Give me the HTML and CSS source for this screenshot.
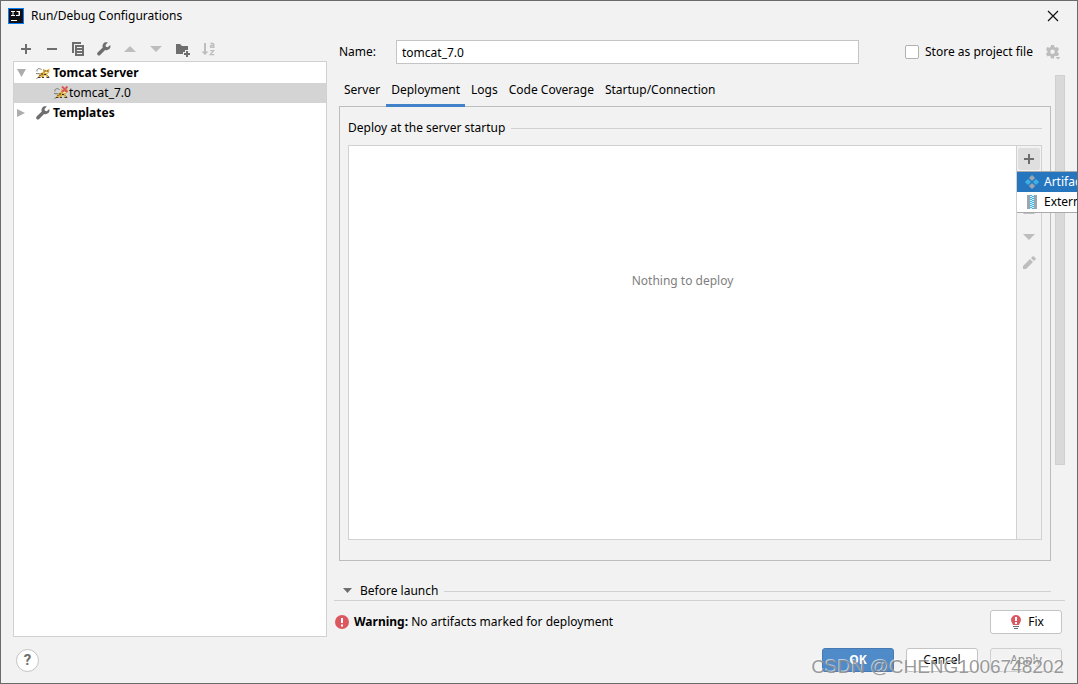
FILE: index.html
```html
<!DOCTYPE html>
<html lang="en">
<head>
<meta charset="utf-8">
<title>Run/Debug Configurations</title>
<link rel="stylesheet" href="styles.css">
</head>
<body>
<svg class="defs" aria-hidden="true">
  <symbol id="wrench" viewBox="0 0 16 16"><path fill="#6e6e6e" d="M14.2 3.9 11.8 6.2 9.9 5.8 9.5 4 11.8 1.6C10.2 1 8.3 1.400 7.300 2.700 6.400 3.900 6.300 5.300 6.800 6.600L1.600 11.500C1 12.200 1 13.200 1.600 13.900 2.300 14.600 3.400 14.700 4.200 13.900L9.100 8.900C10.500 9.400 12.100 9.200 13.300 8.100 14.500 7 14.800 5.300 14.200 3.900Z"/></symbol>
  <symbol id="up" viewBox="0 0 16 16"><path fill="#bdbdbd" d="M2 11 8 5l6 6z"/></symbol>
  <symbol id="down" viewBox="0 0 16 16"><path fill="#bdbdbd" d="M2 5h12l-6 6z"/></symbol>
  <symbol id="plus" viewBox="0 0 16 16"><path fill="#6e6e6e" d="M7 3h2v4h4v2H9v4H7V9H3V7h4z"/></symbol>
  <symbol id="cat" viewBox="0 0 16 16">
    <path d="M6.500 4.500C4 3 1.500 3.500 2 6.500M6 9 1 8.500M5 11.500 1.500 13.500M12 10l2.500 2.500" fill="none" stroke="#6b6b6b" stroke-width=".9"/>
    <path fill="#dcae3e" d="M3 12.500 4.500 9 8 7 8 3.500 10 5h2l2.500-1.500L14.200 7.500l-2.200 1.700 1 2.800h-1.500L10 10l-2 2.500H6.500L6 11l-1.500 2z"/>
    <path fill="#443521" d="M9.500 5.500h1v1h-1zM12.200 5.500h1v1h-1zM6 8.500h2v1H6zM3 12h2.500v1H3zM9 9h2v1H9zM4.500 10h1v1h-1zM7 12h2v1H7zM11.500 12H14v1h-2.500z"/>
    <path fill="#fff3c5" d="M10 7h2.500v1H10z"/>
  </symbol>
</svg>

<div class="dialog">
  <header class="titlebar">
    <svg class="logo" viewBox="0 0 16 16"><path fill="#087cfa" d="M0 0h16v16H0z"/><path fill="#111" d="M1 1h14v14H1z"/><path fill="#fff" d="M3 3h4v1H5.500v3H7v1H3V7h1.500V4H3zM8.500 3H12v4q0 1-1 1H8V7h2.500V4h-2zM3 12h6v1H3z"/></svg>
    <h1 class="title">Run/Debug Configurations</h1>
    <button class="close" aria-label="Close"><svg viewBox="0 0 12 12"><path d="m1 1 10 10M11 1 1 11" stroke="#111" stroke-width="1.200"/></svg></button>
  </header>

  <main class="main">
    <aside class="side">
      <div class="toolbar">
        <button class="tool" aria-label="Add"><svg class="icon" viewBox="0 0 16 16"><use href="#plus"/></svg></button>
        <button class="tool" aria-label="Remove"><svg class="icon" viewBox="0 0 16 16"><path fill="#6e6e6e" d="M3 7h10v2H3z"/></svg></button>
        <button class="tool" aria-label="Copy"><svg class="icon" viewBox="0 0 16 16"><path fill="#6e6e6e" d="M2 1h9v2H4v9H2zM5 4h9v11H5zm2 2v1h5V6zm0 3v1h5V9zm0 3v1h5v-1z" fill-rule="evenodd"/></svg></button>
        <button class="tool" aria-label="Edit templates"><svg class="icon"><use href="#wrench"/></svg></button>
        <button class="tool" aria-label="Move up"><svg class="icon"><use href="#up"/></svg></button>
        <button class="tool" aria-label="Move down"><svg class="icon"><use href="#down"/></svg></button>
        <button class="tool" aria-label="Create folder"><svg class="icon" viewBox="0 0 16 16"><path fill="#6e6e6e" d="M2 3h4l2 2h6v4h-3v2H9v2H2zM12 10h2v2h2v2h-2v2h-2v-2h-2v-2h2z"/></svg></button>
        <button class="tool" aria-label="Sort"><svg class="icon" viewBox="0 0 16 16"><path fill="#bdbdbd" d="M4 2h2v8.500h2.500L5 14 1.500 10.500H4z"/><path fill="none" stroke="#bdbdbd" stroke-width="1.300" d="M10.500 2.500h2.200q1.100 0 1.100 1V7M13.500 4.500h-2q-1.200 0-1.200.9t1.200.9h2M10.300 9.700h3.300l-3.300 4h3.900"/></svg></button>
      </div>
      <ul class="tree">
        <li class="row"><svg class="arrow" viewBox="0 0 10 10"><path fill="#adadad" d="M0 1h9L4.500 9z"/></svg><svg class="icon gap"><use href="#cat"/></svg><b>Tomcat Server</b></li>
        <li class="row child selected"><svg class="icon" viewBox="0 0 16 16"><use href="#cat"/><path d="m9 1.500 5.500 5.500M14.500 1.500 9 7" stroke="#e05555" stroke-width="1.800"/></svg><span>tomcat_7.0</span></li>
        <li class="row"><svg class="arrow" viewBox="0 0 10 10"><path fill="#adadad" d="M0 1v8l8-4z"/></svg><svg class="icon gap"><use href="#wrench"/></svg><b>Templates</b></li>
      </ul>
    </aside>

    <section class="content">
      <div class="name-row">
        <label class="name-label" for="name">Name:</label>
        <input class="name-input" id="name" type="text" value="tomcat_7.0">
        <div class="store">
          <input class="check" type="checkbox" id="store"><label class="store-label" for="store">Store as project file</label>
          <svg class="icon gear" viewBox="0 0 16 16"><path fill="#bdbdbd" fill-rule="evenodd" d="M6 1h3l.4 2 1.300.7 1.900-.7 1.500 2.600L12.600 7v1.500l1.500 1.300-1.500 2.600-1.900-.7-1.300.7L9 14.500H6l-.4-2.100-1.300-.7-1.900.7L.9 9.800l1.500-1.300V7L.9 5.600 2.400 3l1.900.7L5.600 3zm1.500 4.500a2.250 2.250 0 1 0 0 4.500 2.250 2.250 0 0 0 0-4.500"/><path fill="#f2f2f2" d="M9.500 12h6v4h-6z"/><path fill="#bdbdbd" d="M10.500 13h5L13 15.500z"/></svg>
        </div>
      </div>

      <div class="scroller">
        <div class="page">
          <nav class="tabs" role="tablist">
            <button class="tab" role="tab">Server</button>
            <button class="tab active" role="tab" aria-selected="true">Deployment</button>
            <button class="tab" role="tab">Logs</button>
            <button class="tab" role="tab">Code Coverage</button>
            <button class="tab" role="tab">Startup/Connection</button>
          </nav>
          <div class="panel">
            <h2 class="rule">Deploy at the server startup</h2>
            <div class="deploy">
              <div class="empty">Nothing to deploy</div>
              <div class="deploy-tools">
                <button class="square pressed" aria-label="Add"><svg class="icon"><use href="#plus"/></svg></button>
                <button class="square" aria-label="Remove"><svg class="icon" viewBox="0 0 16 16"><path fill="#bdbdbd" d="M3 7h10v2H3z"/></svg></button>
                <button class="square" aria-label="Up"><svg class="icon"><use href="#up"/></svg></button>
                <button class="square" aria-label="Down"><svg class="icon"><use href="#down"/></svg></button>
                <button class="square" aria-label="Edit"><svg class="icon" viewBox="0 0 16 16"><path fill="#bdbdbd" d="m2 11 7-7 3 3-7 7H2zM10 3l1.500-1.500q.7-.7 1.400 0l1.600 1.600q.7.700 0 1.400L13 6z"/></svg></button>
                <div class="popup" role="menu">
                  <button class="item current" role="menuitem"><svg class="icon" viewBox="-1 -1 18 18"><path fill="#9aa7b0" d="m8 0 3.500 3.500L8 7 4.500 3.500zM8 9l3.500 3.500L8 16l-3.500-3.500z"/><path fill="#3bb2e3" d="M3.500 4.500 7 8l-3.500 3.500L0 8zM12.500 4.500 16 8l-3.500 3.500L9 8z"/></svg>Artifact...</button>
                  <button class="item" role="menuitem"><svg class="icon" viewBox="0 0 16 16"><path fill="#9aa7b0" d="M3 1h3v14H3zM10 1h3v14h-3z"/><path fill="#d7eff8" d="M6 1h4v14H6z"/><path d="M7 1v14M9 2v13" stroke="#40b6e0" stroke-width="2" stroke-dasharray="1 1"/></svg>External Source...</button>
                </div>
              </div>
            </div>
          </div>
          <h2 class="rule before"><svg class="fold" viewBox="0 0 10 6"><path fill="#6e6e6e" d="M1 0h9L5.500 5z"/></svg>Before launch</h2>
        </div>
        <div class="track"><div class="thumb"></div></div>
      </div>

      <div class="warning">
        <svg class="alert" viewBox="0 0 14 14"><circle cx="7" cy="7" r="7" fill="#db5860"/><path fill="#fff" d="M6 3h2v5H6zM6 9.500h2v2H6z"/></svg>
        <p class="message"><b>Warning:</b> No artifacts marked for deployment</p>
        <button class="btn"><svg class="icon" viewBox="0 0 16 16"><path fill="#db5860" d="M8 1a5 5 0 0 1 5 5c0 2-1.500 3-2 5H5C4.500 9 3 8 3 6a5 5 0 0 1 5-5"/><path fill="#fff" d="M7 3h2v4H7zM7 8h2v2H7z"/><path fill="#6e6e6e" d="M5 12h6v1H5zM6 14h4v1H6z"/></svg>Fix</button>
      </div>
    </section>
  </main>

  <footer class="footer">
    <button class="help" aria-label="Help">?</button>
    <div class="actions">
      <button class="btn primary">OK</button>
      <button class="btn">Cancel</button>
      <button class="btn" disabled>Apply</button>
    </div>
    <div class="watermark">CSDN @CHENG1006748202</div>
  </footer>
</div>
</body>
</html>
```
FILE: styles.css
```css
* { box-sizing: border-box; }
body {
  margin: 0;
  overflow: hidden;
  background: #f2f2f2;
  color: #000;
  font: 12px/20px "Noto Sans", "Open Sans", sans-serif;
}
button, input { font: inherit; color: inherit; }
button { border: 0; padding: 0; background: none; }
h1, h2, p, ul { margin: 0; padding: 0; font-size: inherit; font-weight: normal; list-style: none; }
svg { display: block; flex: none; }
.defs { position: absolute; width: 0; height: 0; }
.icon { width: 16px; height: 16px; }

.dialog { display: flex; flex-direction: column; height: 100vh; overflow: hidden; border: 1px solid #6b6b6b; }

.titlebar { display: flex; align-items: center; gap: 7px; height: 30px; padding: 0 18px 0 7px; }
.logo { width: 16px; height: 16px; }
.title { flex: 1; }
.close svg { width: 12px; height: 12px; }

.main { display: flex; flex: 1; gap: 7px; min-height: 0; padding: 0 12px; }
.side { display: flex; flex: none; flex-direction: column; width: 314px; }
.toolbar { display: flex; height: 30px; padding-top: 5px; }
.tool { display: grid; place-items: center; width: 26px; height: 26px; }
.tree { flex: 1; padding-top: 1px; border: 1px solid #d1d1d1; background: #fff; }
.row { display: flex; align-items: center; height: 20px; padding-left: 3px; }
.child { padding-left: 39px; }
.selected { background: #d4d4d4; }
.arrow { width: 10px; height: 10px; }
.gap { margin: 0 2px 0 8px; }

.content { display: flex; flex: 1; flex-direction: column; min-width: 0; }
.name-row { display: flex; align-items: center; height: 42px; padding-left: 5px; }
.name-label { width: 57px; }
.name-input { flex: 1; min-width: 0; height: 24px; padding: 0 5px; border: 1px solid #c4c4c4; background: #fff; }
.store { display: flex; align-items: center; gap: 6px; margin-left: 46px; padding-right: 4px; }
.store-label { width: 114px; }
.check { appearance: none; width: 14px; height: 14px; margin: 0; border: 1px solid #b0b0b0; border-radius: 2px; background: #fff; }

.scroller { display: flex; flex: 1; gap: 4px; min-height: 0; border-bottom: 1px solid #d1d1d1; }
.page { display: flex; flex: 1; flex-direction: column; min-width: 0; padding: 2px 0 0 5px; }
.track { width: 10px; padding-top: 2px; }
.thumb { height: 390px; max-height: 75%; border: 1px solid #d0d0d0; background: #d9d9d9; }
.tabs { display: flex; gap: 1px; height: 31px; }
.tab { height: 32px; padding: 0 5px; border-bottom: 3px solid transparent; z-index: 1; }
.tab.active { border-color: #4083c9; }
.panel { display: flex; flex: 1; flex-direction: column; padding: 11px 8px 20px; border: 1px solid #bdbdbd; }
.rule { display: flex; align-items: center; gap: 6px; height: 20px; }
.rule::after { content: ""; flex: 1; border-top: 1px solid #d1d1d1; }
.deploy { display: flex; flex: 1; margin-top: 7px; border: 1px solid #d1d1d1; background: #fff; }
.empty { flex: 1; padding-top: 125px; text-align: center; color: #808080; }
.deploy-tools { position: relative; width: 25px; padding: 2px 1px; border-left: 1px solid #d1d1d1; background: #f2f2f2; }
.square { display: grid; place-items: center; width: 22px; height: 22px; margin-bottom: 4px; border-radius: 2px; }
.pressed { background: #dfdfdf; }
.popup { position: absolute; top: 25px; left: 0; width: 160px; border: 1px solid #aaa; border-left-width: 0; background: #fff; }
.item { display: flex; align-items: center; gap: 4px; width: 100%; height: 20px; padding-left: 7px; }
.current { background: #2675bf; color: #fff; }
.before { height: 18px; margin-top: 21px; padding-left: 3px; }
.fold { width: 10px; height: 6px; margin-right: 2px; }

.warning { display: flex; align-items: center; gap: 5px; height: 42px; margin-bottom: -6px; padding: 0 3px 0 1px; }
.alert { width: 14px; height: 14px; }
.message { flex: 1; }
.btn { display: flex; align-items: center; justify-content: center; gap: 4px; width: 72px; height: 24px; border: 1px solid #c4c4c4; border-radius: 3px; background: #fff; }
.btn:disabled { background: #f2f2f2; border-color: #cfcfcf; color: #8c8c8c; }
.primary { border-color: #4779b3; background: #4f8bc9; color: #fff; font-weight: bold; }

.footer { position: relative; display: flex; align-items: center; justify-content: space-between; height: 46px; padding: 0 15px; }
.help { width: 23px; height: 23px; border: 1px solid #c4c4c4; border-radius: 50%; background: #fff; color: #6e6e6e; font: bold 15px/20px Roboto, sans-serif; }
.actions { display: flex; gap: 12px; }
.watermark { position: absolute; right: 13px; bottom: 4px; color: rgba(130, 130, 130, .8); font: 19px/24px "Liberation Sans", Arial, sans-serif; text-shadow: -1px -1px 0 rgba(255, 255, 255, .6); pointer-events: none; }
```
